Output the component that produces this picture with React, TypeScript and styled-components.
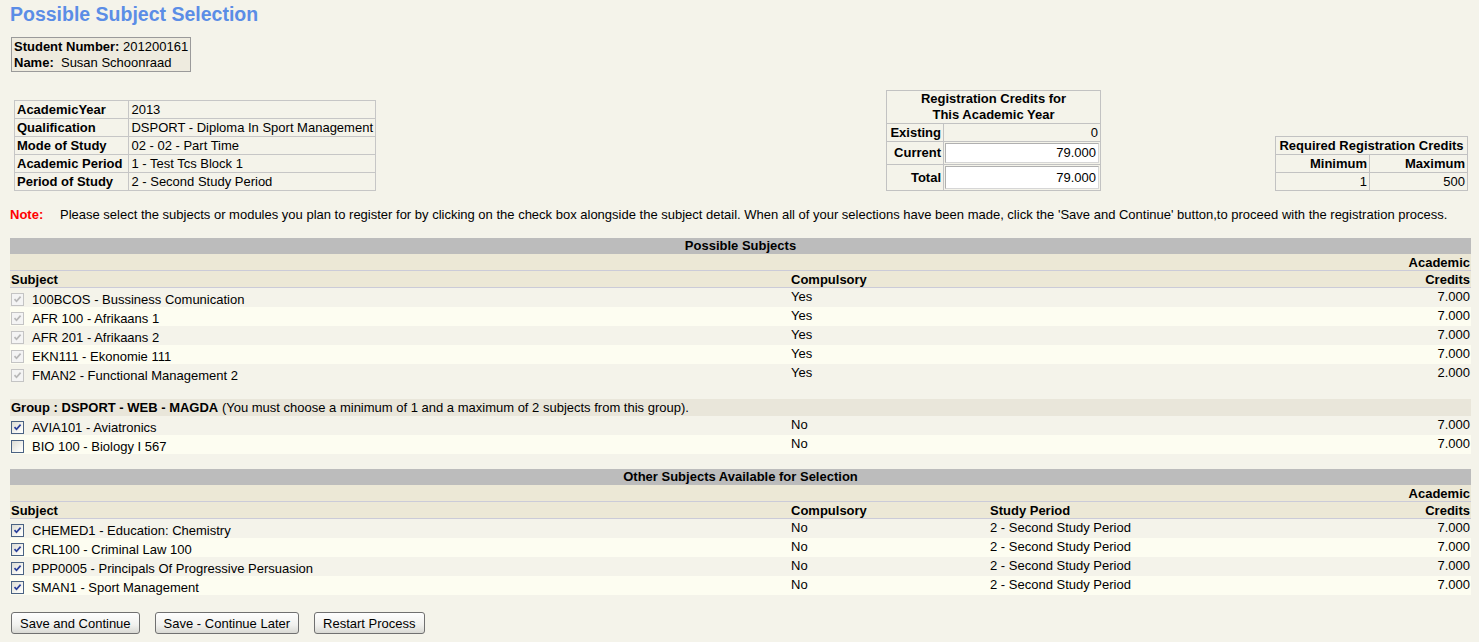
import React from "react";
import styled, { createGlobalStyle, css } from "styled-components";

const NARROW = `"Liberation Sans", Arial, sans-serif`;

const GlobalStyle = createGlobalStyle`
  html, body { margin: 0; padding: 0; }
  body {
    background: #f4f3ea;
    font-family: "Liberation Sans", Arial, sans-serif;
    font-size: 13px;
    color: #000;
  }
`;

const Page = styled.div`
  padding: 3px 8px 0 10px;
`;

const Title = styled.h1`
  margin: 0;
  font-size: 19.5px;
  line-height: 22px;
  font-weight: bold;
  color: #5b8de6;
`;

const StudentBox = styled.div`
  display: inline-block;
  margin-top: 12px;
  margin-left: 1px;
  border: 1px solid #9a9a9a;
  background: #eeebdf;
  padding: 1px 2px 0 2px;
  line-height: 16px;
  font-size: 13px;
`;

const InfoRow = styled.div`
  display: grid;
  grid-template-columns: 872px 389px auto;
  align-items: end;
  margin-top: 18px;
  padding-left: 4px;
`;

const AcadTable = styled.table`
  border-collapse: collapse;
  border: 1px solid #a8a8a8;
  width: 362px;
  td {
    border: 1px solid #c6c6c6;
    height: 17px;
    padding: 0 2px;
    line-height: 16px;
    white-space: nowrap;
  }
`;

const LabelCell = styled.td`
  font-weight: bold;
  width: 110px;
`;

const NarrowTable = styled.table<{ $w: number }>`
  border-collapse: collapse;
  border: 1px solid #a8a8a8;
  width: ${(p) => p.$w}px;
  font-family: ${NARROW};
  font-size: 13px;
  td {
    border: 1px solid #c2c2c2;
    padding: 0 2px;
    line-height: 16px;
    white-space: nowrap;
  }
`;

const NCell = styled.td<{ $align?: string; $bold?: boolean; $h?: number; $box?: boolean }>`
  text-align: ${(p) => p.$align || "right"};
  font-weight: ${(p) => (p.$bold ? "bold" : "normal")};
  height: ${(p) => p.$h || 17}px;
  ${(p) =>
    p.$box &&
    css`
      padding: 1px !important;
    `}
`;

const HeadCell = styled.td`
  text-align: center;
  font-weight: bold;
  height: 32px;
  padding: 0 2px !important;
`;

const ValueBox = styled.div<{ $h: number }>`
  background: #fff;
  border: 1px solid #d6d6d6;
  border-top-color: #b0b0b0;
  border-left-color: #b0b0b0;
  height: ${(p) => p.$h}px;
  line-height: ${(p) => p.$h}px;
  padding: 0 2px;
  text-align: right;
`;

const Note = styled.div`
  margin-top: 16px;
  font-size: 13px;
  line-height: 16px;
  white-space: nowrap;
`;

const NoteLabel = styled.span`
  display: inline-block;
  width: 50px;
  color: #ff0000;
  font-weight: bold;
`;

const SubjTable = styled.table<{ $mt: number }>`
  border-collapse: collapse;
  width: 1461px;
  margin-top: ${(p) => p.$mt}px;
  table-layout: fixed;
`;

const BarCell = styled.td`
  background: #bcbcbc;
  height: 16px;
  line-height: 16px;
  padding: 0;
  text-align: center;
  font-family: ${NARROW};
  font-size: 13px;
  font-weight: bold;
`;

const ColHead = styled.td<{ $align?: string }>`
  background: #ece8d6;
  height: 16px;
  line-height: 15px;
  padding: 0 1px;
  font-weight: bold;
  vertical-align: bottom;
  text-align: ${(p) => p.$align || "left"};
  border-bottom: 1px solid #cbcbd8;
  white-space: nowrap;
`;

const DataRow = styled.tr<{ $light?: boolean }>`
  background: ${(p) => (p.$light ? "#fdfdf1" : "transparent")};
`;

const DataCell = styled.td<{ $align?: string; $narrow?: boolean }>`
  height: 18px;
  padding: 0 1px;
  vertical-align: middle;
  white-space: nowrap;
  line-height: 16px;
  text-align: ${(p) => p.$align || "left"};
  ${(p) =>
    p.$narrow &&
    css`
      vertical-align: top;
      padding-top: 1px;
    `}
`;

const SubjectLabel = styled.div`
  display: flex;
  align-items: center;
  gap: 8px;
  height: 18px;
  padding-top: 4px;
  box-sizing: border-box;
`;

const Box = styled.span<{ $disabled?: boolean }>`
  display: inline-flex;
  flex: none;
  width: 11px;
  height: 11px;
  border: 1px solid ${(p) => (p.$disabled ? "#c4c4c4" : "#4a6283")};
  background: ${(p) =>
    p.$disabled ? "#f4f4f4" : "linear-gradient(135deg, #dcdcd4 0%, #f8f8f4 70%, #ffffff 100%)"};
  align-items: center;
  justify-content: center;
`;

const Spacer = styled.td`
  height: 16px;
  padding: 0;
`;

const GroupCell = styled.td`
  background: #e9e6da;
  height: 17px;
  line-height: 17px;
  padding: 0 1px;
  white-space: nowrap;
`;

const ButtonRow = styled.div`
  display: flex;
  gap: 15px;
  margin-top: 17px;
  padding-left: 1px;
`;

const Button = styled.button`
  height: 22px;
  padding: 0 8px;
  font-family: "Liberation Sans", Arial, sans-serif;
  font-size: 13px;
  color: #000;
  border: 1px solid #707070;
  border-radius: 3px;
  background: linear-gradient(#fefefe 0%, #f1f1ee 60%, #d9d9d4 100%);
`;

function CheckBox({ checked, disabled }: { checked: boolean; disabled?: boolean }) {
  return (
    <Box $disabled={disabled}>
      {checked && (
        <svg width="9" height="9" viewBox="0 0 9 9">
          <path
            d="M1.5 4.2 L3.5 6.3 L7.6 1.6"
            fill="none"
            stroke={disabled ? "#b8b8b8" : "#2a3f9a"}
            strokeWidth="1.7"
          />
        </svg>
      )}
    </Box>
  );
}

const compulsory = [
  ["100BCOS - Bussiness Comunication", "7.000"],
  ["AFR 100 - Afrikaans 1", "7.000"],
  ["AFR 201 - Afrikaans 2", "7.000"],
  ["EKN111 - Ekonomie 111", "7.000"],
  ["FMAN2 - Functional Management 2", "2.000"],
];

const group = [
  { name: "AVIA101 - Aviatronics", checked: true },
  { name: "BIO 100 - Biology I 567", checked: false },
];

const others = [
  "CHEMED1 - Education: Chemistry",
  "CRL100 - Criminal Law 100",
  "PPP0005 - Principals Of Progressive Persuasion",
  "SMAN1 - Sport Management",
];

export default function App() {
  return (
    <Page>
      <GlobalStyle />
      <Title>Possible Subject Selection</Title>
      <StudentBox>
        <b>Student Number:</b> 201200161
        <br />
        <b>Name:</b>&nbsp; Susan Schoonraad
      </StudentBox>

      <InfoRow>
        <AcadTable>
          <tbody>
            <tr>
              <LabelCell>AcademicYear</LabelCell>
              <td>2013</td>
            </tr>
            <tr>
              <LabelCell>Qualification</LabelCell>
              <td>DSPORT - Diploma In Sport Management</td>
            </tr>
            <tr>
              <LabelCell>Mode of Study</LabelCell>
              <td>02 - 02 - Part Time</td>
            </tr>
            <tr>
              <LabelCell>Academic Period</LabelCell>
              <td>1 - Test Tcs Block 1</td>
            </tr>
            <tr>
              <LabelCell>Period of Study</LabelCell>
              <td>2 - Second Study Period</td>
            </tr>
          </tbody>
        </AcadTable>

        <NarrowTable $w={215}>
          <tbody>
            <tr>
              <HeadCell colSpan={2}>
                Registration Credits for
                <br />
                This Academic Year
              </HeadCell>
            </tr>
            <tr>
              <NCell $bold $h={17} style={{ width: 52 }}>
                Existing
              </NCell>
              <NCell>0</NCell>
            </tr>
            <tr>
              <NCell $bold $h={21}>Current</NCell>
              <NCell $box>
                <ValueBox $h={18}>79.000</ValueBox>
              </NCell>
            </tr>
            <tr>
              <NCell $bold $h={24}>Total</NCell>
              <NCell $box>
                <ValueBox $h={21}>79.000</ValueBox>
              </NCell>
            </tr>
          </tbody>
        </NarrowTable>

        <NarrowTable $w={193}>
          <tbody>
            <tr>
              <NCell colSpan={2} $align="center" $bold>
                Required Registration Credits
              </NCell>
            </tr>
            <tr>
              <NCell $bold style={{ width: 89 }}>
                Minimum
              </NCell>
              <NCell $bold>Maximum</NCell>
            </tr>
            <tr>
              <NCell>1</NCell>
              <NCell>500</NCell>
            </tr>
          </tbody>
        </NarrowTable>
      </InfoRow>

      <Note>
        <NoteLabel>Note:</NoteLabel>
        Please select the subjects or modules you plan to register for by clicking on the check box
        alongside the subject detail. When all of your selections have been made, click the 'Save and
        Continue' button,to proceed with the registration process.
      </Note>

      <SubjTable $mt={15}>
        <colgroup>
          <col style={{ width: 780 }} />
          <col />
          <col style={{ width: 100 }} />
        </colgroup>
        <tbody>
          <tr>
            <BarCell colSpan={3}>Possible Subjects</BarCell>
          </tr>
          <tr>
            <ColHead />
            <ColHead />
            <ColHead $align="right">Academic</ColHead>
          </tr>
          <tr>
            <ColHead>Subject</ColHead>
            <ColHead>Compulsory</ColHead>
            <ColHead $align="right">Credits</ColHead>
          </tr>
          {compulsory.map(([name, cr], i) => (
            <DataRow key={name} $light={i % 2 === 1}>
              <DataCell>
                <SubjectLabel>
                  <CheckBox checked disabled />
                  {name}
                </SubjectLabel>
              </DataCell>
              <DataCell $narrow>Yes</DataCell>
              <DataCell $narrow $align="right">
                {cr}
              </DataCell>
            </DataRow>
          ))}
          <tr>
            <Spacer colSpan={3} />
          </tr>
          <tr>
            <GroupCell colSpan={3}>
              <b>Group : DSPORT - WEB - MAGDA</b> (You must choose a minimum of 1 and a maximum of 2
              subjects from this group).
            </GroupCell>
          </tr>
          {group.map((g, i) => (
            <DataRow key={g.name} $light={i % 2 === 1}>
              <DataCell>
                <SubjectLabel>
                  <CheckBox checked={g.checked} />
                  {g.name}
                </SubjectLabel>
              </DataCell>
              <DataCell $narrow>No</DataCell>
              <DataCell $narrow $align="right">
                7.000
              </DataCell>
            </DataRow>
          ))}
        </tbody>
      </SubjTable>

      <SubjTable $mt={15}>
        <colgroup>
          <col style={{ width: 780 }} />
          <col style={{ width: 199 }} />
          <col />
          <col style={{ width: 100 }} />
        </colgroup>
        <tbody>
          <tr>
            <BarCell colSpan={4}>Other Subjects Available for Selection</BarCell>
          </tr>
          <tr>
            <ColHead />
            <ColHead />
            <ColHead />
            <ColHead $align="right">Academic</ColHead>
          </tr>
          <tr>
            <ColHead>Subject</ColHead>
            <ColHead>Compulsory</ColHead>
            <ColHead>Study Period</ColHead>
            <ColHead $align="right">Credits</ColHead>
          </tr>
          {others.map((name, i) => (
            <DataRow key={name} $light={i % 2 === 1}>
              <DataCell>
                <SubjectLabel>
                  <CheckBox checked />
                  {name}
                </SubjectLabel>
              </DataCell>
              <DataCell $narrow>No</DataCell>
              <DataCell $narrow>2 - Second Study Period</DataCell>
              <DataCell $narrow $align="right">
                7.000
              </DataCell>
            </DataRow>
          ))}
        </tbody>
      </SubjTable>

      <ButtonRow>
        <Button>Save and Continue</Button>
        <Button>Save - Continue Later</Button>
        <Button>Restart Process</Button>
      </ButtonRow>
    </Page>
  );
}
